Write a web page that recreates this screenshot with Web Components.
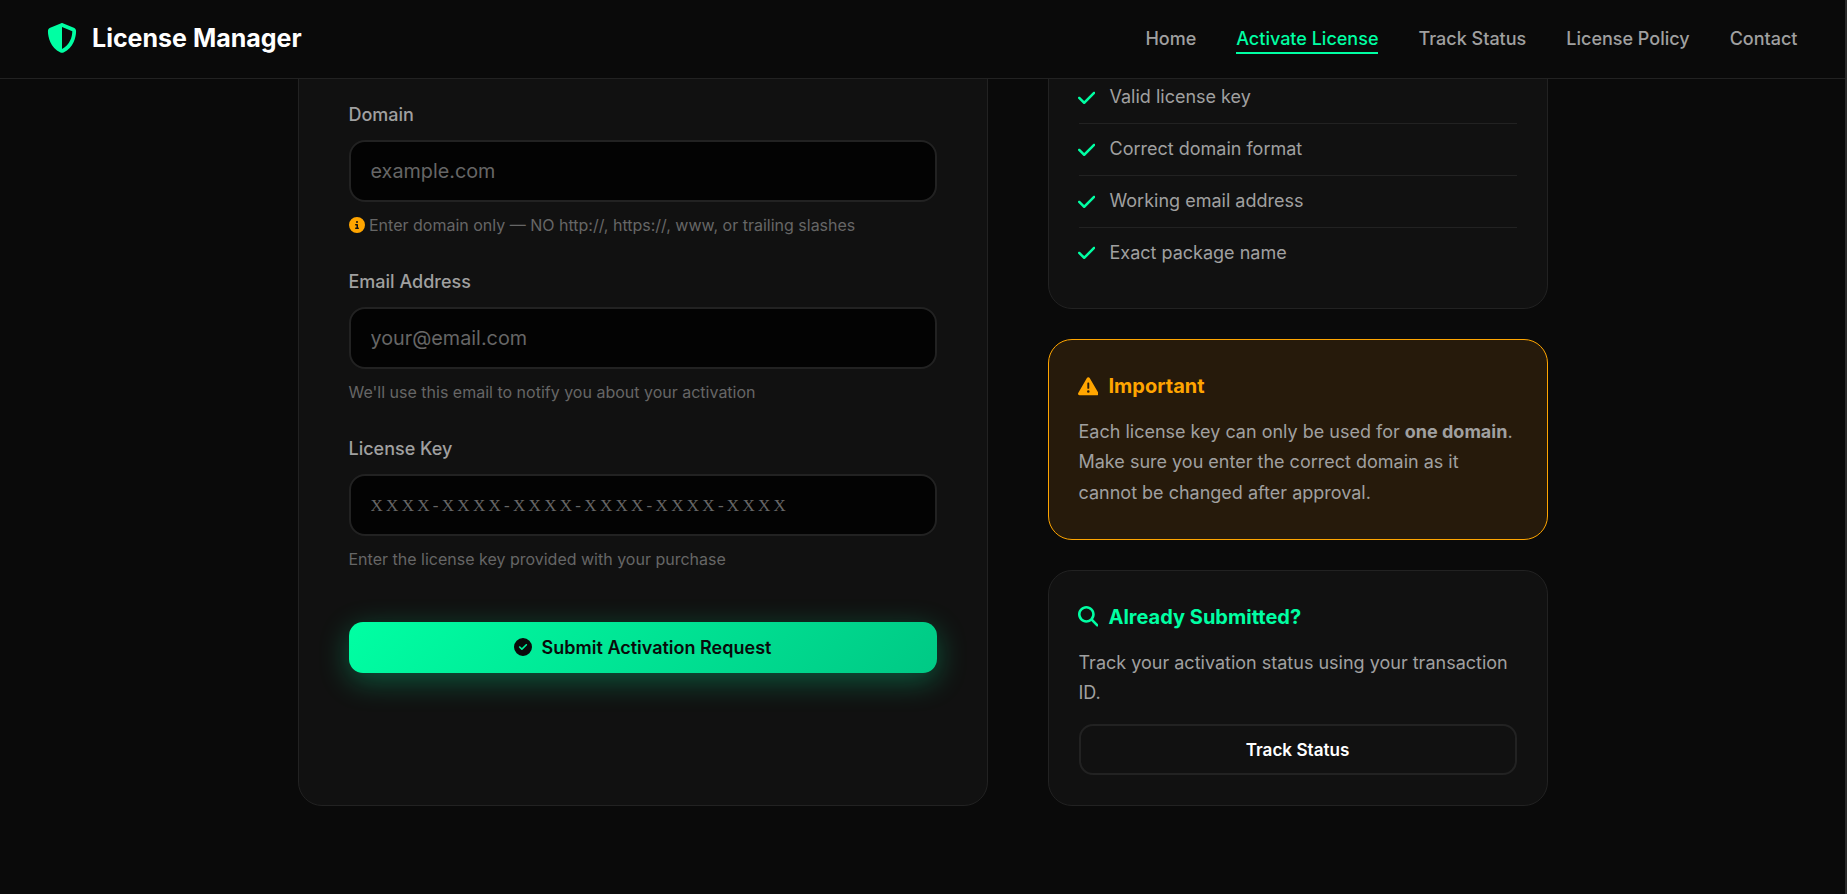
<!DOCTYPE html>
<html lang="en">
<head>
<meta charset="utf-8">
<title>License Manager</title>
<style>
  html, body { margin: 0; height: 100%; background: #0a0a0a; }
  body { font-family: Inter, "Liberation Sans", sans-serif; color: #a0a0a0; overflow: hidden; }
</style>
</head>
<body>
<lm-app>
  <lm-header slot="header">
    <lm-nav-link>Home</lm-nav-link>
    <lm-nav-link active>Activate License</lm-nav-link>
    <lm-nav-link>Track Status</lm-nav-link>
    <lm-nav-link>License Policy</lm-nav-link>
    <lm-nav-link>Contact</lm-nav-link>
  </lm-header>

  <lm-card slot="form" kind="form">
    <lm-field label="Domain" placeholder="example.com">
      <lm-icon name="info" style="color:#ffa500"></lm-icon> Enter domain only — NO http://, https://, www, or trailing slashes
    </lm-field>
    <lm-field label="Email Address" placeholder="your@email.com">We'll use this email to notify you about your activation</lm-field>
    <lm-field label="License Key" placeholder="XXXX-XXXX-XXXX-XXXX-XXXX-XXXX" mono>Enter the license key provided with your purchase</lm-field>
    <lm-button primary><lm-icon name="circle-check"></lm-icon>Submit Activation Request</lm-button>
  </lm-card>

  <lm-card slot="side" kind="list">
    <lm-check-item>Valid license key</lm-check-item>
    <lm-check-item>Correct domain format</lm-check-item>
    <lm-check-item>Working email address</lm-check-item>
    <lm-check-item last>Exact package name</lm-check-item>
  </lm-card>

  <lm-card slot="side" kind="warning">
    <lm-card-title icon="warning">Important</lm-card-title>
    <lm-text>Each license key can only be used for <strong>one domain</strong>. Make sure you enter the correct domain as it cannot be changed after approval.</lm-text>
  </lm-card>

  <lm-card slot="side">
    <lm-card-title icon="search" accent>Already Submitted?</lm-card-title>
    <lm-text>Track your activation status using your transaction ID.</lm-text>
    <lm-button>Track Status</lm-button>
  </lm-card>
</lm-app>

<script>
// font awesome solid shapes
const ICONS = {
  shield: ['0 0 512 512', 'M256 0c4.6 0 9.2 1 13.4 2.9L457.7 82.8c22 9.3 38.4 31 38.3 57.2c-.5 99.2-41.3 280.7-213.6 363.2c-16.7 8-36.1 8-52.8 0C57.3 420.7 16.5 239.2 16 140c-.1-26.2 16.3-47.9 38.3-57.2L242.7 2.9C246.8 1 251.4 0 256 0zm0 66.8V444.8C394 378 431.1 230.1 432 141.4L256 66.8l0 0z'],
  info: ['0 0 512 512', 'M256 512A256 256 0 1 0 256 0a256 256 0 1 0 0 512zM216 336h24V272H216c-13.3 0-24-10.7-24-24s10.7-24 24-24h48c13.3 0 24 10.7 24 24v88h8c13.3 0 24 10.7 24 24s-10.7 24-24 24H216c-13.3 0-24-10.7-24-24s10.7-24 24-24zm40-208a32 32 0 1 1 0 64 32 32 0 1 1 0-64z'],
  'circle-check': ['0 0 512 512', 'M256 512A256 256 0 1 0 256 0a256 256 0 1 0 0 512zM369 209L241 337c-9.4 9.4-24.6 9.4-33.9 0l-64-64c-9.4-9.4-9.4-24.6 0-33.9s24.6-9.4 33.9 0l47 47L335 175c9.4-9.4 24.6-9.4 33.9 0s9.4 24.6 0 33.9z'],
  check: ['0 0 448 512', 'M438.6 105.4c12.5 12.5 12.5 32.8 0 45.3l-256 256c-12.5 12.5-32.8 12.5-45.3 0l-128-128c-12.5-12.5-12.5-32.8 0-45.3s32.8-12.5 45.3 0L160 338.7 393.4 105.4c12.5-12.5 32.8-12.5 45.3 0z'],
  warning: ['0 0 512 512', 'M256 32c14.2 0 27.3 7.5 34.5 19.8l216 368c7.3 12.4 7.3 27.7 .2 40.1S486.3 480 472 480H40c-14.3 0-27.6-7.7-34.7-20.1s-7-27.8 .2-40.1l216-368C228.7 39.5 241.8 32 256 32zm0 128c-13.3 0-24 10.7-24 24V296c0 13.3 10.7 24 24 24s24-10.7 24-24V184c0-13.3-10.7-24-24-24zm32 224a32 32 0 1 0 -64 0 32 32 0 1 0 64 0z'],
  search: ['0 0 512 512', 'M416 208c0 45.9-14.9 88.3-40 122.7L502.6 457.4c12.5 12.5 12.5 32.8 0 45.3s-32.8 12.5-45.3 0L330.7 376c-34.4 25.2-76.8 40-122.7 40C93.1 416 0 322.9 0 208S93.1 0 208 0S416 93.1 416 208zM208 352a144 144 0 1 0 0-288 144 144 0 1 0 0 288z']
};

class LmIcon extends HTMLElement {
  connectedCallback() {
    const [box, d] = ICONS[this.getAttribute('name')];
    this.attachShadow({mode: 'open'}).innerHTML = `
      <style>
        :host { display: inline-block; height: 1em; line-height: 0; vertical-align: -0.125em; }
        svg { height: 1em; width: auto; display: block; fill: currentColor; }
      </style>
      <svg viewBox="${box}" aria-hidden="true"><path d="${d}"/></svg>`;
  }
}

const appTemplate = document.createElement('template');
appTemplate.innerHTML = `
<style>
  /* thin grey scrollbar strip on the right edge */
  :host { display: flex; flex-direction: column; box-sizing: border-box; height: 100vh; border-right: 2px solid #2a2a2a; }
  main { flex: 1; overflow: hidden; min-height: 0; }
  /* the page is photographed scrolled, the cards start above the fold */
  .grid {
    width: 1250px; margin: -39px auto 0;
    display: grid; grid-template-columns: 1fr 500px; gap: 60px;
  }
  .side { display: flex; flex-direction: column; gap: 30px; }
</style>
<slot name="header"></slot>
<main>
  <div class="grid">
    <slot name="form"></slot>
    <div class="side"><slot name="side"></slot></div>
  </div>
</main>`;

class LmApp extends HTMLElement {
  constructor() {
    super();
    this.attachShadow({mode: 'open'}).appendChild(appTemplate.content.cloneNode(true));
  }
}

const headerTemplate = document.createElement('template');
headerTemplate.innerHTML = `
<style>
  :host { display: flex; flex: none; align-items: center; justify-content: space-between;
    height: 78px; padding: 0 47.5px 0 48px; background: #0a0a0a; border-bottom: 1px solid #222; }
  .logo { display: flex; align-items: center; gap: 15px; padding-bottom: 2px; color: #fff; font-size: 25px; font-weight: 700; }
  .logo lm-icon { color: #00ffa3; font-size: 30px; margin-left: -1px; }
  nav { display: flex; gap: 40px; }
</style>
<div class="logo"><lm-icon name="shield"></lm-icon><span>License Manager</span></div>
<nav><slot></slot></nav>`;

class LmHeader extends HTMLElement {
  constructor() {
    super();
    this.attachShadow({mode: 'open'}).appendChild(headerTemplate.content.cloneNode(true));
  }
}

const navLinkTemplate = document.createElement('template');
navLinkTemplate.innerHTML = `
<style>
  :host { display: block; position: relative; color: #a0a0a0; font-size: 18px; font-weight: 500; line-height: 26px; }
  :host([active]) { color: #00ffa3; }
  :host([active])::after { content: ""; position: absolute; left: 0; right: 0; bottom: -2px; height: 2px; background: #00ffa3; }
</style>
<slot></slot>`;

class LmNavLink extends HTMLElement {
  constructor() {
    super();
    this.attachShadow({mode: 'open'}).appendChild(navLinkTemplate.content.cloneNode(true));
  }
}

const cardTemplate = document.createElement('template');
cardTemplate.innerHTML = `
<style>
  :host { display: block; box-sizing: border-box; background: #111; border: 1px solid #222; border-radius: 24px; padding: 30px; }
  :host([kind="form"]) { padding: 59px 50px 0; height: 100%; }
  :host([kind="list"]) { padding: 31px 30px 29px; }
  :host([kind="warning"]) { background: #261a0b; border-color: #ffa500; }
</style>
<slot></slot>`;

class LmCard extends HTMLElement {
  constructor() {
    super();
    this.attachShadow({mode: 'open'}).appendChild(cardTemplate.content.cloneNode(true));
  }
}

const fieldTemplate = document.createElement('template');
fieldTemplate.innerHTML = `
<style>
  :host { display: block; margin-bottom: 27.6px; }
  label { display: block; font-size: 18px; font-weight: 500; line-height: 30.6px; margin-bottom: 9.8px; color: #a0a0a0; }
  input {
    display: block; box-sizing: border-box; width: 100%; height: 62px; padding: 0 20px;
    background: #030303; border: 2px solid #222; border-radius: 16px; outline: none;
    color: #fff; font: 400 19.8px Inter, "Liberation Sans", sans-serif;
  }
  input::placeholder { color: #666; opacity: 1; }
  input.mono { font-family: "Liberation Serif", serif; font-size: 17px; letter-spacing: 3.3px; padding-top: 2px; }
  .hint { margin-top: 10px; font-size: 16px; line-height: 27px; color: #666; }
</style>
<label></label>
<input type="text">
<div class="hint"><slot></slot></div>`;

class LmField extends HTMLElement {
  constructor() {
    super();
    this.attachShadow({mode: 'open'}).appendChild(fieldTemplate.content.cloneNode(true));
  }
  connectedCallback() {
    const input = this.shadowRoot.querySelector('input');
    this.shadowRoot.querySelector('label').textContent = this.getAttribute('label');
    input.placeholder = this.getAttribute('placeholder');
    input.classList.toggle('mono', this.hasAttribute('mono'));
  }
}

const buttonTemplate = document.createElement('template');
buttonTemplate.innerHTML = `
<style>
  :host { display: block; }
  button {
    display: flex; align-items: center; justify-content: center; gap: 10px;
    box-sizing: border-box; width: 100%; height: 51px;
    background: transparent; border: 2px solid #222; border-radius: 14px;
    color: #fff; font: 600 17.1px Inter, "Liberation Sans", sans-serif;
  }
  /* margin collapses with the field above */
  :host([primary]) { margin-top: 48.4px; }
  :host([primary]) button {
    border: 0; color: #0a0a0a; font-size: 18px;
    background: linear-gradient(135deg, #00ffa3, #00c985);
    box-shadow: 0 8px 30px rgba(0, 255, 163, .3);
  }
</style>
<button type="button"><slot></slot></button>`;

class LmButton extends HTMLElement {
  constructor() {
    super();
    this.attachShadow({mode: 'open'}).appendChild(buttonTemplate.content.cloneNode(true));
  }
}

const checkTemplate = document.createElement('template');
checkTemplate.innerHTML = `
<style>
  :host { display: flex; align-items: center; gap: 14.7px; padding: 10.2px 0; font-size: 18px; line-height: 30.6px;
    color: #a0a0a0; border-bottom: 1px solid #222; }
  :host([last]) { border-bottom: 0; }
  lm-icon { color: #00ffa3; font-size: 19.8px; margin-left: -1px; }
</style>
<lm-icon name="check"></lm-icon><span><slot></slot></span>`;

class LmCheckItem extends HTMLElement {
  constructor() {
    super();
    this.attachShadow({mode: 'open'}).appendChild(checkTemplate.content.cloneNode(true));
  }
}

class LmCardTitle extends HTMLElement {
  connectedCallback() {
    this.attachShadow({mode: 'open'}).innerHTML = `
      <style>
        :host { display: flex; align-items: center; gap: 10.4px; margin-bottom: 15px; color: #ffa500; font-size: 20px; font-weight: 700; line-height: 32px; }
        :host([accent]) { color: #00ffa3; }
        lm-icon { font-size: 20.6px; margin-left: -1px; }
      </style>
      <lm-icon name="${this.getAttribute('icon')}"></lm-icon><span><slot></slot></span>`;
  }
}

const textTemplate = document.createElement('template');
textTemplate.innerHTML = `
<style>
  :host { display: block; font-size: 18px; line-height: 30.6px; color: #a0a0a0; }
  :host(:not(:last-child)) { margin-bottom: 15px; }
  ::slotted(strong) { font-weight: 700; }
</style>
<slot></slot>`;

class LmText extends HTMLElement {
  constructor() {
    super();
    this.attachShadow({mode: 'open'}).appendChild(textTemplate.content.cloneNode(true));
  }
}

// icon first, the others use it in their shadow roots
customElements.define('lm-icon', LmIcon);
customElements.define('lm-app', LmApp);
customElements.define('lm-header', LmHeader);
customElements.define('lm-nav-link', LmNavLink);
customElements.define('lm-card', LmCard);
customElements.define('lm-field', LmField);
customElements.define('lm-button', LmButton);
customElements.define('lm-check-item', LmCheckItem);
customElements.define('lm-card-title', LmCardTitle);
customElements.define('lm-text', LmText);
</script>
</body>
</html>
